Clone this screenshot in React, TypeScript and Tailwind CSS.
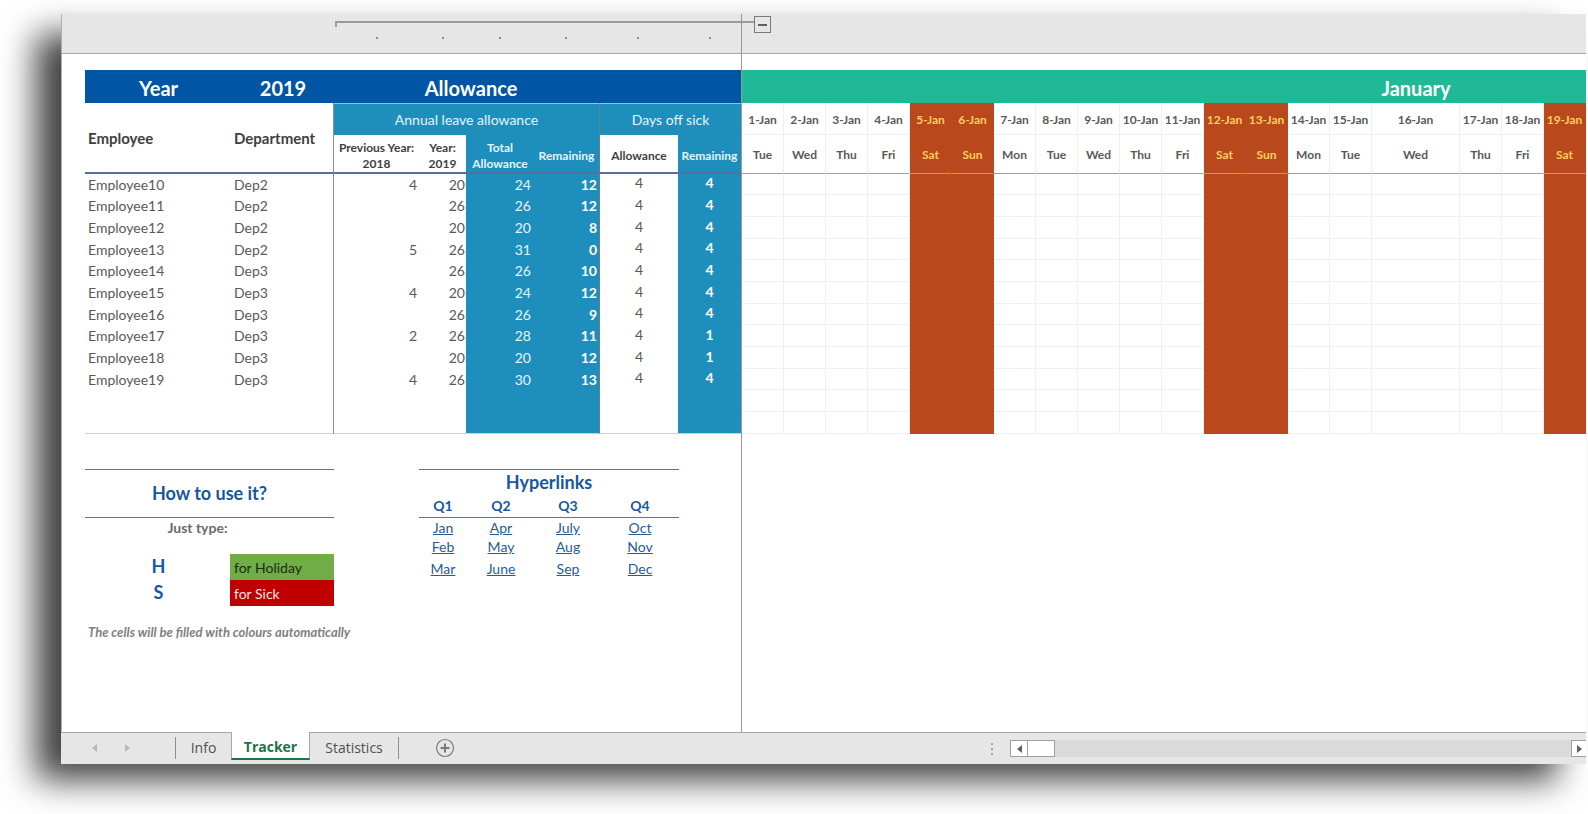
import React, { useState } from 'react';
import clsx from 'clsx';

interface Employee {
    name: string;
    dep: string;
    prev?: number;
    year: number;
    total: number;
    remaining: number;
    sick: number;
    sickLeft: number;
}

const EMPLOYEES: Employee[] = [
    { name: 'Employee10', dep: 'Dep2', prev: 4, year: 20, total: 24, remaining: 12, sick: 4, sickLeft: 4 },
    { name: 'Employee11', dep: 'Dep2', year: 26, total: 26, remaining: 12, sick: 4, sickLeft: 4 },
    { name: 'Employee12', dep: 'Dep2', year: 20, total: 20, remaining: 8, sick: 4, sickLeft: 4 },
    { name: 'Employee13', dep: 'Dep2', prev: 5, year: 26, total: 31, remaining: 0, sick: 4, sickLeft: 4 },
    { name: 'Employee14', dep: 'Dep3', year: 26, total: 26, remaining: 10, sick: 4, sickLeft: 4 },
    { name: 'Employee15', dep: 'Dep3', prev: 4, year: 20, total: 24, remaining: 12, sick: 4, sickLeft: 4 },
    { name: 'Employee16', dep: 'Dep3', year: 26, total: 26, remaining: 9, sick: 4, sickLeft: 4 },
    { name: 'Employee17', dep: 'Dep3', prev: 2, year: 26, total: 28, remaining: 11, sick: 4, sickLeft: 1 },
    { name: 'Employee18', dep: 'Dep3', year: 20, total: 20, remaining: 12, sick: 4, sickLeft: 1 },
    { name: 'Employee19', dep: 'Dep3', prev: 4, year: 26, total: 30, remaining: 13, sick: 4, sickLeft: 4 },
];

// two spare rows are kept under the last employee
const ROWS: (Employee | null)[] = [...EMPLOYEES, null, null];

const WEEKDAYS = ['Mon', 'Tue', 'Wed', 'Thu', 'Fri', 'Sat', 'Sun'];
const DAYS = Array.from({ length: 19 }, (_, i) => {
    const weekday = WEEKDAYS[(i + 1) % 7];
    return { date: `${i + 1}-Jan`, weekday, weekend: weekday === 'Sat' || weekday === 'Sun' };
});

const QUARTERS = ['Q1', 'Q2', 'Q3', 'Q4'];
const MONTHS = [
    ['Jan', 'Apr', 'July', 'Oct'],
    ['Feb', 'May', 'Aug', 'Nov'],
    ['Mar', 'June', 'Sep', 'Dec'],
];

const ROW_CLASS = 'h-[22px] nth-[3n+1]:h-[21px]';

const AllowanceTable: React.FC = () => (
    <table className="w-full table-fixed border-separate border-spacing-0">
        <colgroup>
            <col className="w-[145px]" />
            <col className="w-[104px]" />
            <col className="w-[85px]" />
            <col className="w-[47px]" />
            <col className="w-[68px]" />
            <col className="w-[66px]" />
            <col className="w-[78px]" />
            <col />
        </colgroup>
        <thead>
            <tr className="h-[33px] bg-[#0055a5] text-xl leading-6 font-bold text-white [&>th]:pt-[2px]">
                <th className="pl-[2px]">Year</th>
                <th className="pl-[2px]">2019</th>
                <th colSpan={4} className="pl-2">Allowance</th>
                <th colSpan={2}></th>
            </tr>
            <tr className="h-8 text-sm">
                <th rowSpan={2} className="border-b-2 border-[#5a6ea6] pt-[2px] pl-[3px] text-left text-[15px] font-bold text-[#404040]">Employee</th>
                <th rowSpan={2} className="border-r border-b-2 border-r-[#8c8c8c] border-b-[#5a6ea6] pt-[2px] pl-1 text-left text-[15px] font-bold text-[#404040]">Department</th>
                <th colSpan={4} className="border-t border-r border-t-[#8fc3e0] border-r-[#5f7f95] bg-[#1e8fbc] font-normal text-[#e4f5fc]">Annual leave allowance</th>
                <th colSpan={2} className="border-t border-[#8fc3e0] bg-[#1e8fbc] font-normal text-[#e4f5fc]">Days off sick</th>
            </tr>
            <tr className="h-[39px] text-xs leading-4 font-bold text-[#404040]">
                <th className="border-b-2 border-[#5a6ea6] pt-1">Previous Year: 2018</th>
                <th className="border-b-2 border-[#5a6ea6] pt-1">Year: 2019</th>
                <th className="border-b-2 border-[#5a6ea6] bg-[#1e8fbc] pt-1 text-[#e4f5fc]">Total Allowance</th>
                <th className="border-r border-b-2 border-r-[#5f7f95] border-b-[#5a6ea6] bg-[#1e8fbc] pt-1 text-[#e4f5fc]">Remaining</th>
                <th className="border-b-2 border-[#5a6ea6] pt-1">Allowance</th>
                <th className="border-b-2 border-[#5a6ea6] bg-[#1e8fbc] pt-1 text-[#e4f5fc]">Remaining</th>
            </tr>
        </thead>
        <tbody className="text-sm leading-5 text-[#595959] [&>tr:last-child>td]:border-b [&>tr:last-child>td]:border-b-[#d0d0d0]">
            {ROWS.map((row, i) => (
                <tr key={i} className={ROW_CLASS}>
                    <td className="pl-[3px]">{row?.name}</td>
                    <td className="border-r border-r-[#8c8c8c] pl-1">{row?.dep}</td>
                    <td className="pr-[2px] text-right">{row?.prev}</td>
                    <td className="pr-px text-right">{row?.year}</td>
                    <td className="bg-[#1e8fbc] pr-[3px] text-right text-[#e4f5fc]">{row?.total}</td>
                    <td className="border-r border-r-[#5f7f95] bg-[#1e8fbc] pr-[2px] text-right font-bold text-white">{row?.remaining}</td>
                    <td className="pb-[3px] text-center leading-4">{row?.sick}</td>
                    <td className="bg-[#1e8fbc] pb-[3px] text-center leading-4 font-bold text-white">{row?.sickLeft}</td>
                </tr>
            ))}
        </tbody>
    </table>
);

const Calendar: React.FC = () => (
    <table className="w-[844px] table-fixed border-separate border-spacing-0 text-center">
        <colgroup>
            {DAYS.map((day, i) => (
                <col key={day.date} className={i === 15 ? 'w-[88px]' : 'w-[42px]'} />
            ))}
        </colgroup>
        <thead className="text-xs font-bold text-[#595959] [&_th]:pt-[2px]">
            <tr className="h-[33px] bg-[#1fb998] text-xl leading-6 text-white">
                <th colSpan={15}></th>
                <th>January</th>
                <th colSpan={3}></th>
            </tr>
            <tr className="h-8">
                {DAYS.map(day => (
                    <th key={day.date} className={clsx('border-r border-b', day.weekend ? 'border-[#b9481c] bg-[#b9481c] text-[#ffd05c]' : 'border-[#f0f0f0]')}>
                        {day.date}
                    </th>
                ))}
            </tr>
            <tr className="h-[39px]">
                {DAYS.map(day => (
                    <th key={day.date} className={clsx('border-r border-b border-b-[#a0a0a0]', day.weekend ? 'border-r-[#b9481c] bg-[#b9481c] text-[#ffd05c]' : 'border-r-[#f0f0f0]')}>
                        {day.weekday}
                    </th>
                ))}
            </tr>
        </thead>
        <tbody>
            {ROWS.map((_, i) => (
                <tr key={i} className={ROW_CLASS}>
                    {DAYS.map(day => (
                        <td key={day.date} className={clsx('border-r border-b', day.weekend ? 'border-[#b9481c] bg-[#b9481c]' : 'border-[#f0f0f0]')}></td>
                    ))}
                </tr>
            ))}
        </tbody>
    </table>
);

const HowTo: React.FC = () => (
    <section className="w-[249px]">
        <h2 className="border-y border-[#4a7ab0] pt-[11px] pb-3 text-center text-lg leading-6 font-bold text-[#1557a0]">How to use it?</h2>
        <p className="pr-6 text-center text-sm leading-5 font-bold text-[#6a6a6a]">Just type:</p>
        <dl className="mt-4 grid grid-cols-[145px_104px] text-sm leading-[25px]">
            <dt className="pl-[2px] text-center text-lg leading-[25px] font-bold text-[#1557a0]">H</dt>
            <dd className="bg-[#70ad47] pt-px pl-1 text-[#1c2b12]">for Holiday</dd>
            <dt className="pl-[2px] text-center text-lg leading-[25px] font-bold text-[#1557a0]">S</dt>
            <dd className="bg-[#c00000] pt-px pl-1 text-[#fbe5e5]">for Sick</dd>
        </dl>
        <p className="mt-4 pl-[3px] text-[13px] leading-5 font-bold whitespace-nowrap text-[#808080] italic">The cells will be filled with colours automatically</p>
    </section>
);

const Hyperlinks: React.FC = () => (
    <table className="w-[260px] table-fixed self-start border-separate border-spacing-0 text-center text-sm leading-5 text-[#1f5c99]">
        <colgroup>
            <col className="w-[48px]" />
            <col className="w-[68px]" />
            <col className="w-[66px]" />
            <col className="w-[78px]" />
        </colgroup>
        <thead>
            <tr>
                <th colSpan={4} className="h-[25px] border-t border-[#4a7ab0] text-lg leading-6 font-bold text-[#1557a0]">Hyperlinks</th>
            </tr>
            <tr>
                {QUARTERS.map(q => (
                    <th key={q} className="h-6 border-b border-[#4a7ab0] font-bold text-[#1557a0]">{q}</th>
                ))}
            </tr>
        </thead>
        <tbody>
            {MONTHS.map(row => (
                <tr key={row[0]} className="leading-[19px] last:h-6">
                    {row.map(month => (
                        <td key={month}>
                            <a href={`#${month}`} className="underline">{month}</a>
                        </td>
                    ))}
                </tr>
            ))}
        </tbody>
    </table>
);

const Triangle: React.FC<{ flip?: boolean; className?: string }> = ({ flip, className }) => (
    <svg viewBox="0 0 5 8" className={clsx('h-2 w-[5px]', flip && 'rotate-180', className)} fill="currentColor" aria-hidden="true">
        <path d="M5 0v8L0 4z" />
    </svg>
);

const TabBar: React.FC = () => {
    const [active, setActive] = useState('Tracker');

    return (
        <footer className="flex h-8 shrink-0 bg-[#e6e6e6] font-['Open_Sans',sans-serif] text-sm text-[#505050]">
            <div className="flex w-[114px] items-center gap-7 border-t border-[#a6a6a6] pb-px pl-[31px] text-[#b8b8b8]">
                <button aria-label="Previous sheet"><Triangle /></button>
                <button aria-label="Next sheet"><Triangle flip /></button>
            </div>
            {['Info', 'Tracker', 'Statistics'].map(tab => (
                <button
                    key={tab}
                    onClick={() => setActive(tab)}
                    className={clsx(
                        'flex items-center justify-center',
                        tab === 'Info' && 'w-[56px]',
                        tab === 'Tracker' && 'w-[79px]',
                        tab === 'Statistics' && 'w-[89px]',
                        active === tab
                            ? 'mb-1 border-x border-b-2 border-x-[#a6a6a6] border-b-[#217346] bg-white pt-1 font-bold text-[#217346]'
                            : 'border-t border-[#a6a6a6] pb-[2px]'
                    )}
                >
                    <span className={clsx('flex h-[22px] flex-1 items-center justify-center', tab === 'Info' && 'border-l border-[#8c8c8c]', tab === 'Statistics' && 'border-r border-[#8c8c8c]')}>
                        {tab}
                    </span>
                </button>
            ))}
            <div className="flex flex-1 items-center border-t border-[#a6a6a6] pb-px pl-9">
                <button aria-label="New sheet" className="text-[#7a7a7a]">
                    <svg viewBox="0 0 20 20" className="size-5" fill="none" stroke="currentColor" aria-hidden="true">
                        <circle cx="10" cy="10" r="8.5" strokeWidth="1.2" />
                        <path d="M10 5.5v9M5.5 10h9" strokeWidth="2" />
                    </svg>
                </button>
            </div>
            <div className="flex w-[600px] items-center border-t border-[#a6a6a6]">
                <div className="flex w-6 flex-col gap-[3px] pl-[5px]">
                    <span className="size-[2px] bg-[#a0a0a0]"></span>
                    <span className="size-[2px] bg-[#a0a0a0]"></span>
                    <span className="size-[2px] bg-[#a0a0a0]"></span>
                </div>
                <div className="flex h-[17px] flex-1 bg-[#dadada] text-[#606060]">
                    <button aria-label="Scroll left" className="flex w-[18px] items-center justify-center border border-[#a0a0a0] bg-white"><Triangle /></button>
                    <div className="w-[27px] border border-l-0 border-[#a0a0a0] bg-white"></div>
                    <button aria-label="Scroll right" className="ml-auto flex w-[15px] items-center justify-center border border-r-0 border-[#a0a0a0] bg-white"><Triangle flip /></button>
                </div>
            </div>
        </footer>
    );
};

export default function App() {
    return (
        <div className="flex min-h-screen overflow-hidden bg-white pt-[14px] pr-[2px] pb-[50px] pl-[61px] font-[Lato,sans-serif]">
            <div className="flex min-w-0 flex-1 flex-col bg-white shadow-[-27px_18px_32px_-2px_rgba(0,0,0,0.75)]">
                <div className="flex flex-1 border-l border-[#b0b0b0]">
                    <div className="w-[680px] shrink-0 border-r border-[#999999]">
                        <div className="h-10 border-b border-[#a6a6a6] bg-[#e6e6e6] pt-[7px] pl-[273px]">
                            <div className="h-[6px] border-t-2 border-l-2 border-[#9a9a9a]"></div>
                            <div className="mt-[10px] grid grid-cols-[83px_49px_66px_66px_78px_66px] justify-items-center">
                                {[1, 2, 3, 4, 5, 6].map(level => (
                                    <span key={level} className="size-[2px] bg-[#8c8c8c]"></span>
                                ))}
                            </div>
                        </div>
                        <div className="pt-4 pl-[23px]">
                            <AllowanceTable />
                            <div className="mt-[35px] flex gap-[85px]">
                                <HowTo />
                                <Hyperlinks />
                            </div>
                        </div>
                    </div>
                    <div className="min-w-0 flex-1 overflow-hidden">
                        <div className="flex h-10 items-start border-b border-[#a6a6a6] bg-[#e6e6e6]">
                            <div className="mt-[7px] h-[2px] w-3 bg-[#9a9a9a]"></div>
                            <button aria-label="Collapse group" className="mt-[2px] flex size-[17px] items-center justify-center border border-[#7a7a7a]">
                                <span className="h-[2px] w-[9px] bg-[#606060]"></span>
                            </button>
                        </div>
                        <div className="pt-4">
                            <Calendar />
                        </div>
                    </div>
                </div>
                <TabBar />
            </div>
        </div>
    );
}
